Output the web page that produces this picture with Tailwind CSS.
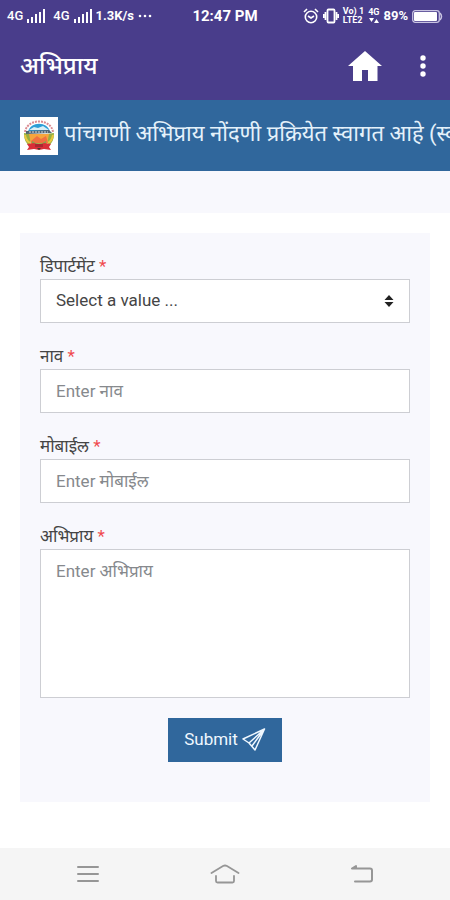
<!DOCTYPE html>
<html lang="mr">
<head>
<meta charset="utf-8">
<meta name="viewport" content="width=device-width, initial-scale=1">
<title>अभिप्राय</title>
<script src="https://cdn.jsdelivr.net/npm/@tailwindcss/browser@4"></script>
</head>
<body class="flex min-h-screen flex-col overflow-x-hidden bg-white font-[Roboto,'Noto_Sans',sans-serif] text-[17px] text-[#454545]">
<header class="bg-[#493d8b] text-white">
  <div class="grid h-8 grid-cols-[1fr_auto_1fr] items-center px-[7px] text-[13px] font-medium whitespace-nowrap">
    <div class="flex items-center gap-1">
      <span>4G</span>
      <svg class="w-[18px] shrink-0" viewBox="0 0 18 14" fill="currentColor" aria-hidden="true"><path d="M0 10h2v4H0zM4 8h2v6H4zM8 5h2v9H8zM12 3h2v11h-2zM16 0h2v14h-2z"/></svg>
      <span class="pl-1">4G</span>
      <svg class="w-[18px] shrink-0" viewBox="0 0 18 14" fill="currentColor" aria-hidden="true"><path d="M0 10h2v4H0zM4 8h2v6H4zM8 5h2v9H8zM12 3h2v11h-2zM16 0h2v14h-2z"/></svg>
      <span class="font-bold">1.3K/s</span>
      <svg class="w-[14px] shrink-0" viewBox="0 0 14 4" fill="currentColor" aria-hidden="true"><circle cx="2" cy="2" r="1.3"/><circle cx="7" cy="2" r="1.3"/><circle cx="12" cy="2" r="1.3"/></svg>
    </div>
    <time class="text-[15px] font-bold">12:47 PM</time>
    <div class="flex items-center justify-end gap-1">
      <svg class="w-4 shrink-0" viewBox="0 0 16 16" fill="none" stroke="currentColor" stroke-width="1.6" aria-hidden="true"><circle cx="8" cy="9" r="5.7"/><path d="M1 4l3-3M15 4l-3-3M5 8l3 2 3-2"/></svg>
      <svg class="w-4 shrink-0" viewBox="0 0 16 16" fill="none" stroke="currentColor" stroke-width="1.8" aria-hidden="true"><rect x="4.5" y="1.5" width="7" height="13" rx="1"/><path d="M2.500 4v8M13.500 4v8M.6 6v4M15.400 6v4"/></svg>
      <span class="flex flex-col text-[9px] leading-[9px] font-bold"><span>Vo) 1</span><span>LTE2</span></span>
      <span class="flex flex-col items-center text-[9px] leading-[9px] font-bold"><span>4G</span><svg class="h-[7px] w-[10px]" viewBox="0 0 10 7" fill="currentColor" aria-hidden="true"><path d="M0 1h5L2.500 5zM7.500 2L10 6H5z"/></svg></span>
      <span class="font-bold">89%</span>
      <svg class="w-[31px] shrink-0" viewBox="0 0 31 13" aria-hidden="true"><rect x=".7" y=".7" width="26.600" height="11.600" rx="2.500" fill="none" stroke="#c9c4e2" stroke-width="1.300"/><rect x="2" y="2" width="23" height="9" rx="1" fill="#fff"/><path d="M28 3q3 3.500 0 7" fill="none" stroke="#c9c4e2" stroke-width="1.500"/></svg>
    </div>
  </div>
  <div class="flex h-[68px] items-center pr-4 pl-5">
    <h1 class="flex-1 text-2xl font-medium">अभिप्राय</h1>
    <button type="button" aria-label="Home" class="mr-[30px]"><svg class="block w-[34px]" viewBox="0 0 34 30" fill="currentColor" aria-hidden="true"><path d="M17 0L34 15h-4.500v15H20V19h-6v11H5V15H0z"/></svg></button>
    <button type="button" aria-label="More options" class="flex w-[22px] justify-center"><svg class="block h-[22px]" viewBox="0 0 6 22" fill="currentColor" aria-hidden="true"><circle cx="3" cy="3" r="2.700"/><circle cx="3" cy="11" r="2.700"/><circle cx="3" cy="19" r="2.700"/></svg></button>
  </div>
</header>
<div class="flex h-[71px] items-center gap-1.5 overflow-hidden bg-[#30679c] pl-5 text-[22px] whitespace-nowrap text-[#e4f1fa]">
  <svg class="w-[38px] shrink-0" viewBox="0 0 38 38" role="img" aria-label="पांचगणी">
    <rect width="38" height="38" fill="#fff"/>
    <path d="M5 15C7 1 31 1 33 15" fill="none" stroke="#d98b91" stroke-width="2" stroke-dasharray="2 1"/>
    <path d="M8 15C10 4 28 4 30 15z" fill="#2c9ed6"/>
    <path d="M9 13l5-3 4 1 5-2 6 4z" fill="#d9f0f7"/>
    <path d="M4 16q0 10 6 13l2-12zM34 16q0 10-6 13l-2-12z" fill="#98ae41"/>
    <path d="M5 18q1 6 5 8M33 18q-1 6-5 8" fill="none" stroke="#e9c83f" stroke-width="2"/>
    <path d="M9 17h20l-2 10H11z" fill="#f6a53c"/>
    <path d="M11 24l6-5 4 3 5-3 2 7H11z" fill="#ef7140"/>
    <path d="M6 14l23-1 3 3-26 1z" fill="#526572"/>
    <path d="M9 15h19" stroke="#d8dfdc" stroke-dasharray="2 1"/>
    <path d="M12 24q7 5 14 0v5H12z" fill="#7caa4d"/>
    <path d="M7 27l7-1 5 2 5-2 7 1-2 3 2 3-7-1-5 1-5-1-7 1 2-3z" fill="#d92f38"/>
    <path d="M15 27h8v3h-8z" fill="#ab2632"/><path d="M17 31h4l-2 2z" fill="#463c32"/>
  </svg>
  <p class="pb-1">पांचगणी अभिप्राय नोंदणी प्रक्रियेत स्वागत आहे (स्वच्छ)</p>
</div>
<div class="h-[42px] bg-[#f8f8fd]"></div>
<main class="flex-1 px-5 pt-5 pb-[46px]">
  <form class="flex flex-col gap-5 bg-[#f8f8fd] px-5 pt-5 pb-10">
    <div>
      <label for="department" class="block leading-[26px]">डिपार्टमेंट <span class="text-[#f04a4f]">*</span></label>
      <div class="relative">
        <select id="department" class="block h-11 w-full appearance-none border border-[#cdced3] bg-white px-[15px]"><option>Select a value ...</option></select>
        <svg class="pointer-events-none absolute inset-y-0 right-4 my-auto w-[10px]" viewBox="0 0 10 12" fill="#222" aria-hidden="true"><path d="M5 0l4.500 5h-9zM.5 7h9L5 12z"/></svg>
      </div>
    </div>
    <div>
      <label for="name" class="block leading-[26px]">नाव <span class="text-[#f04a4f]">*</span></label>
      <input id="name" type="text" placeholder="Enter नाव" class="block h-11 w-full border border-[#cdced3] bg-white px-[15px] placeholder:text-[#86898d]">
    </div>
    <div>
      <label for="mobile" class="block leading-[26px]">मोबाईल <span class="text-[#f04a4f]">*</span></label>
      <input id="mobile" type="tel" placeholder="Enter मोबाईल" class="block h-11 w-full border border-[#cdced3] bg-white px-[15px] placeholder:text-[#86898d]">
    </div>
    <div>
      <label for="feedback" class="block leading-[26px]">अभिप्राय <span class="text-[#f04a4f]">*</span></label>
      <textarea id="feedback" placeholder="Enter अभिप्राय" class="block h-[149px] w-full resize-none border border-[#cdced3] bg-white px-[15px] py-2 leading-[26px] placeholder:text-[#86898d]"></textarea>
    </div>
    <button type="submit" class="flex h-11 items-center gap-1 self-center bg-[#30679c] px-4 text-[#f0f8ff]">Submit
      <svg class="w-6" viewBox="0 0 24 24" fill="none" stroke="currentColor" stroke-width="1.500" stroke-linejoin="round" aria-hidden="true"><path d="M22.500 1L1 11l6 4 6 7zM22.500 1L7 15M22.500 1L10 18"/></svg>
    </button>
  </form>
</main>
<nav aria-label="System navigation" class="flex h-[52px] items-center justify-between bg-[#f5f5f5] px-[73px] text-[#969696]">
  <button type="button" aria-label="Recent apps" class="flex w-[30px] justify-center"><svg class="w-[22px]" viewBox="0 0 22 18" fill="none" stroke="currentColor" stroke-width="2" stroke-linecap="round" aria-hidden="true"><path d="M1 2h20M1 9h20M1 16h20"/></svg></button>
  <button type="button" aria-label="System home" class="flex w-[30px] justify-center"><svg class="w-[30px]" viewBox="0 0 30 20" fill="none" stroke="currentColor" stroke-width="1.800" stroke-linecap="round" stroke-linejoin="round" aria-hidden="true"><path d="M1.500 9L13 2q2-1 4 0l11.500 7M6 12v5q0 1.500 1.500 1.500h15q1.500 0 1.500-1.500v-5"/></svg></button>
  <button type="button" aria-label="Back" class="flex w-[30px] justify-center"><svg class="w-[22px]" viewBox="0 0 22 20" fill="none" stroke="currentColor" stroke-width="2" stroke-linecap="round" stroke-linejoin="round" aria-hidden="true"><path d="M1 4.500h18q2 0 2 2v9q0 2-2 2H4M1 4.500L5 2v2.500"/></svg></button>
</nav>
</body>
</html>
